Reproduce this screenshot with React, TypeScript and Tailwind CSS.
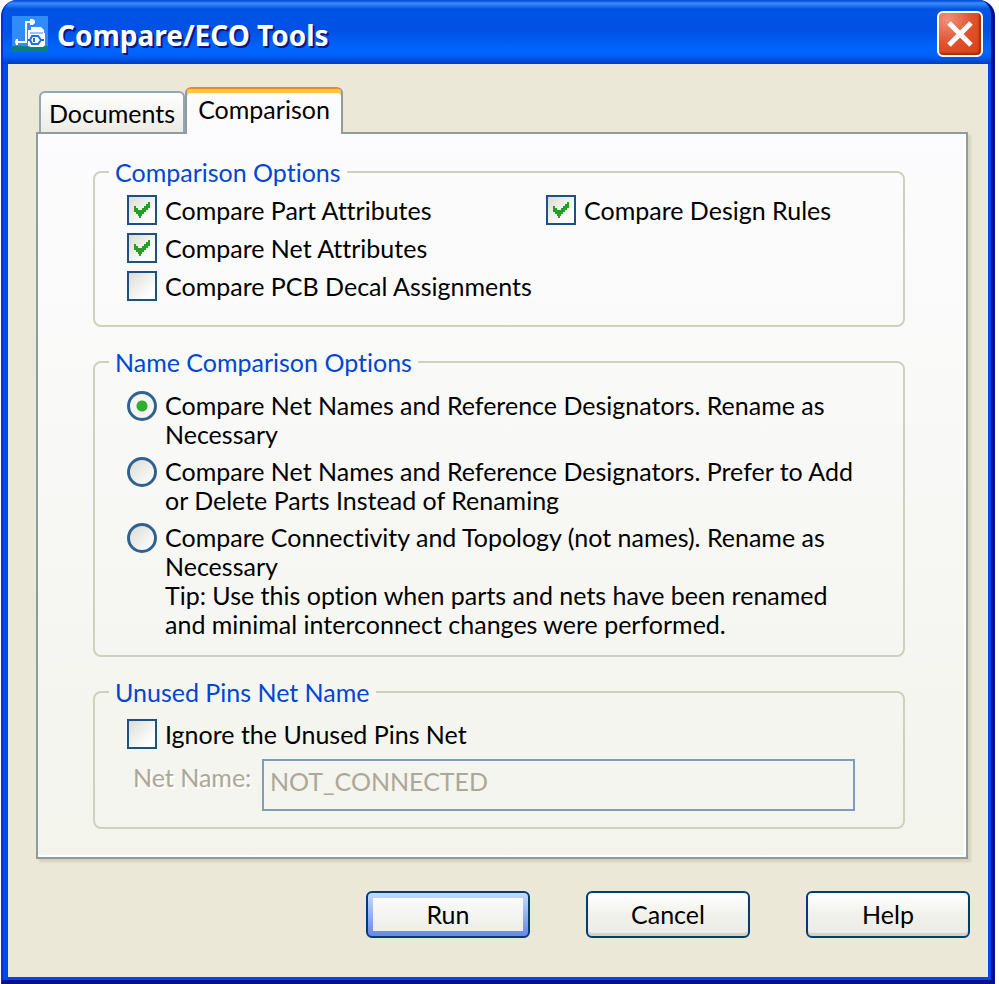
import { ReactNode } from "react";

function Check({ id, label, checked = false }: { id: string; label: string; checked?: boolean }) {
  return (
    <div className="flex h-[38px] items-center gap-2">
      <span className="relative flex size-[30px] shrink-0">
        <input
          id={id}
          type="checkbox"
          defaultChecked={checked}
          className="peer size-[30px] appearance-none border-2 border-[#1c5180] bg-linear-to-br from-[#dcdcd6] to-white to-80%"
        />
        <svg
          viewBox="0 0 30 30"
          shapeRendering="crispEdges"
          className="pointer-events-none absolute inset-0 hidden size-[30px] fill-[#21a121] peer-checked:block"
        >
          <path d="M7 11H9V13H11V15H15V13H17V11H19V9H21V7H23V13H21V15H19V17H17V19H15V21H14V23H12V21H11V19H9V17H7Z" />
        </svg>
      </span>
      <label htmlFor={id}>{label}</label>
    </div>
  );
}

function Radio({ id, lines, checked = false }: { id: string; lines: string[]; checked?: boolean }) {
  return (
    <div className="flex items-start gap-2">
      <input
        id={id}
        type="radio"
        name="name-comparison"
        defaultChecked={checked}
        className="size-[30px] shrink-0 appearance-none rounded-full border-[3px] border-[#31628f] bg-linear-to-br from-[#dcdcd6] to-white checked:bg-[radial-gradient(circle,#2fae2f_0_5px,#f4f4f2_6px)]"
      />
      <label htmlFor={id}>
        {lines.map((line) => (
          <span key={line} className="block">
            {line}
          </span>
        ))}
      </label>
    </div>
  );
}

function Group({ title, children }: { title: string; children: ReactNode }) {
  return (
    <fieldset className="rounded-lg border-2 border-[#d0d0bf]">
      <legend className="ml-[14px] px-1.5 leading-[30px] text-[#0046d5]">{title}</legend>
      {children}
    </fieldset>
  );
}

const plainButton =
  "h-[47px] w-[164px] rounded-md border-2 border-[#003c74] bg-linear-to-b from-white via-[#f1f1ec] to-[#ecebe5] shadow-[inset_0_-3px_1px_#d6d0c5]";

export default function App() {
  return (
    <div className="flex min-h-screen flex-col bg-white pr-1 pl-px font-[Lato,'Liberation_Sans',sans-serif] text-[25px] leading-[29px] text-black [font-variant-ligatures:none]">
      <main className="flex grow flex-col overflow-hidden rounded-t-2xl border-r-4 border-b-4 border-l-2 border-r-[#00138c] border-b-[#00138c] border-l-[#0831d9] bg-[#0046ee]">
        <header className="flex h-16 items-center gap-[9px] bg-[linear-gradient(#0a52dc_0_1px,#3b8cf8_3px,#2a7cf2_5px,#0054e4_9px,#0050e4_30px,#0066ff_50px,#0060f8_56px,#003cc4_64px)] pt-1 pr-2 pl-[9px]">
          <svg viewBox="0 0 36 36" className="size-9 shrink-0">
            <path fill="#2f8cf8" d="M0 0h36v30H0z" />
            <path fill="#0a8080" d="M0 30h36v6H0z" />
            <path fill="#fff" d="M16 30V14h3v-3h10l3 3v3h1v12l-2 2H19z" />
            <path fill="none" stroke="#fff" strokeWidth="2" d="M21 6h-7v20H4" />
            <path fill="#fff" d="M18 3h3l2 2v2l-2 2h-3zM4 23h2v6H4l-1-3z" />
            <path fill="none" stroke="#1f6fe6" strokeWidth="2" d="M16 24h3m10 0h3M20 20h6l3 4-3 4h-6l-2-4z" />
            <path fill="#1f6fe6" d="M21 22h2v4h-2z" />
            <path fill="none" stroke="#2f8cf8" strokeWidth="1" d="M18 17h13" />
          </svg>
          <h1 className="grow pt-0.5 font-['Noto_Sans',sans-serif] text-[28px] leading-9 font-bold text-white [text-shadow:2px_2px_0_#0a1883]">
            Compare/ECO Tools
          </h1>
          <button
            type="button"
            aria-label="Close"
            className="flex size-[46px] items-center justify-center rounded-md border-2 border-white bg-[radial-gradient(circle_at_20%_15%,#f0917a,#e0512e_50%,#d8400f)] shadow-[inset_-2px_-2px_2px_#a82c0c]"
          >
            <svg viewBox="0 0 26 26" className="size-[26px]" fill="none" stroke="#fff" strokeWidth="5">
              <path d="M2 2l22 22M24 2L2 24" />
            </svg>
          </button>
        </header>
        <div className="mr-[3px] mb-[3px] ml-[5px] grow bg-[#ebe8d7] pt-[23px] pl-7">
          <div className="mr-5">
            <div role="tablist" className="ml-[3px] flex items-end">
              <button
                role="tab"
                type="button"
                aria-selected="false"
                className="h-[41px] w-[146px] rounded-t-md border-2 border-b-0 border-[#91a7b4] bg-linear-to-b from-white to-[#ecebe5] pt-0.5"
              >
                Documents
              </button>
              <button
                role="tab"
                type="button"
                aria-selected="true"
                className="relative -mb-0.5 h-[47px] w-[158px] rounded-t-md border-x-2 border-t-2 border-x-[#919b9c] border-t-[#e68b2c] bg-[#fcfcfe] pb-1 shadow-[inset_0_4px_0_#ffc73c]"
              >
                Comparison
              </button>
            </div>
            <div className="flex flex-col gap-5 border-2 border-[#919b9c] bg-linear-to-b from-[#fcfcfe] to-[#f3f4ec] pt-[23px] pr-[61px] pb-7 pl-[55px] shadow-[inset_-2px_-2px_0_#fff,3px_3px_2px_#d6d2bf]">
              <Group title="Comparison Options">
                <div className="grid grid-cols-[54%_1fr] pt-1 pb-5 pl-8">
                  <div>
                    <Check id="part" label="Compare Part Attributes" checked />
                    <Check id="net" label="Compare Net Attributes" checked />
                    <Check id="decal" label="Compare PCB Decal Assignments" />
                  </div>
                  <Check id="rules" label="Compare Design Rules" checked />
                </div>
              </Group>
              <Group title="Name Comparison Options">
                <div className="flex flex-col gap-2 pt-[14px] pb-4 pl-8">
                  <Radio
                    id="rename"
                    checked
                    lines={["Compare Net Names and Reference Designators. Rename as", "Necessary"]}
                  />
                  <Radio
                    id="prefer"
                    lines={[
                      "Compare Net Names and Reference Designators. Prefer to Add",
                      "or Delete Parts Instead of Renaming",
                    ]}
                  />
                  <Radio
                    id="topology"
                    lines={[
                      "Compare Connectivity and Topology (not names). Rename as",
                      "Necessary",
                      "Tip: Use this option when parts and nets have been renamed",
                      "and minimal interconnect changes were performed.",
                    ]}
                  />
                </div>
              </Group>
              <Group title="Unused Pins Net Name">
                <div className="pt-2 pr-12 pb-4 pl-8">
                  <Check id="ignore" label="Ignore the Unused Pins Net" />
                  <div className="flex items-start pt-1.5 text-[#aca899]">
                    <label htmlFor="netname" className="w-[135px] pt-1 pl-1.5 [text-shadow:2px_2px_0_#fff]">
                      Net Name:
                    </label>
                    <input
                      id="netname"
                      disabled
                      defaultValue="NOT_CONNECTED"
                      className="h-[52px] min-w-0 grow border-2 border-[#7f9db9] pb-2 pl-1.5"
                    />
                  </div>
                </div>
              </Group>
            </div>
          </div>
          <div className="flex justify-end gap-14 pt-8 pr-[18px]">
            <button
              type="button"
              className="h-[47px] w-[164px] rounded-md border-2 border-[#003c74] bg-linear-to-b from-[#c4dcfc] to-[#6a86e8] p-[5px]"
            >
              <span className="flex h-full items-center justify-center bg-linear-to-b from-[#fafafa] to-[#eeeee8]">Run</span>
            </button>
            <button type="button" className={plainButton}>
              Cancel
            </button>
            <button type="button" className={plainButton}>
              Help
            </button>
          </div>
        </div>
      </main>
    </div>
  );
}
